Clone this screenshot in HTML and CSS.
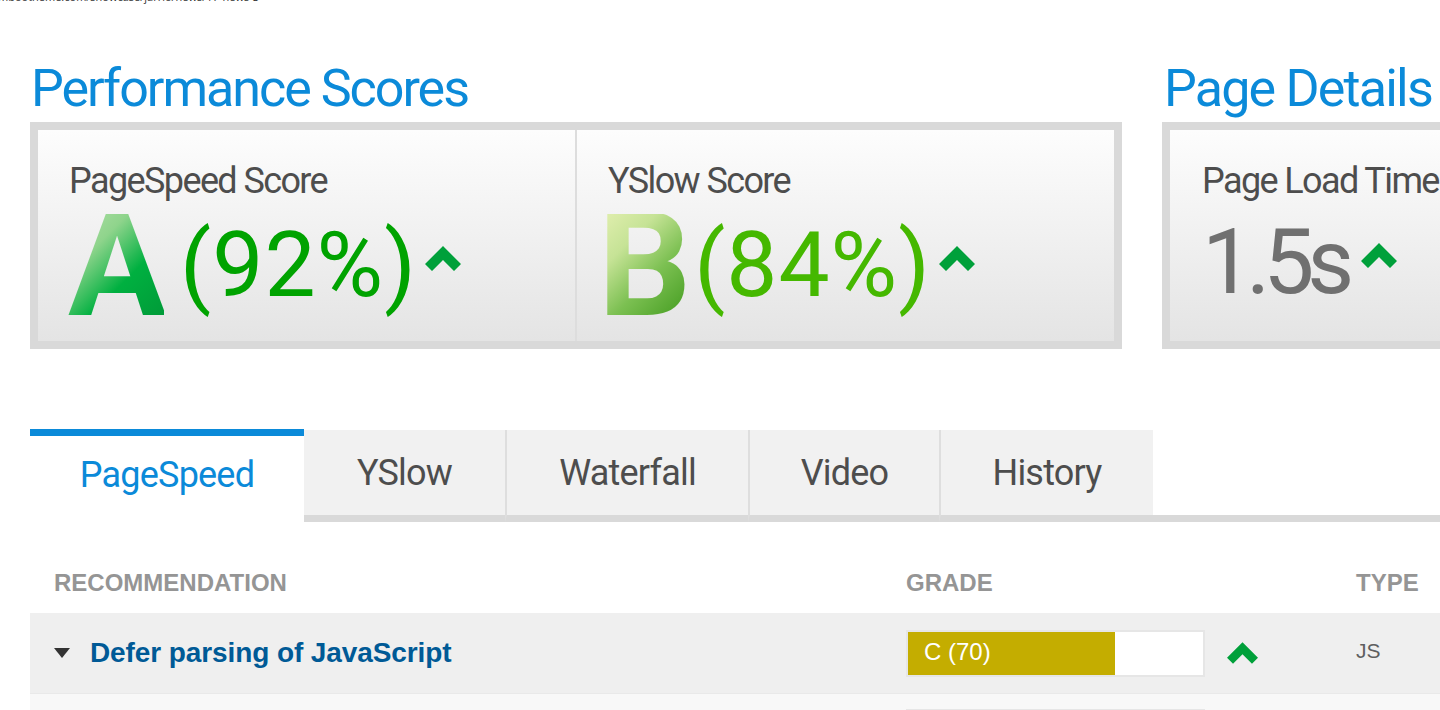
FILE: index.html
```html
<!DOCTYPE html>
<html lang="en">
<head>
<meta charset="utf-8">
<title>Performance Report</title>
<link rel="stylesheet" href="styles.css">
</head>
<body>
<div class="url">mbootheme.com/showcase/jarrio/news/17-news-3</div>
<main class="page">
  <div class="top">
    <section class="perf">
      <h2 class="heading">Performance Scores</h2>
      <div class="box">
        <div class="score">
          <div class="label">PageSpeed Score</div>
          <div class="value">
            <span class="grade grade-a">A</span>
            <span class="pct pct-a">(92%)</span>
            <svg class="caret" viewBox="0 0 36 25" aria-hidden="true"><polygon points="0,18 18,0 36,18 29,25 18,14 7,25"/></svg>
          </div>
        </div>
        <div class="divider"></div>
        <div class="score">
          <div class="label">YSlow Score</div>
          <div class="value">
            <span class="grade grade-b">B</span>
            <span class="pct pct-b">(84%)</span>
            <svg class="caret" viewBox="0 0 36 25" aria-hidden="true"><polygon points="0,18 18,0 36,18 29,25 18,14 7,25"/></svg>
          </div>
        </div>
      </div>
    </section>
    <section class="details">
      <h2 class="heading">Page Details</h2>
      <div class="box">
        <div class="score">
          <div class="label">Page Load Time</div>
          <div class="value">
            <span class="pct pct-time">1.5s</span>
            <svg class="caret" viewBox="0 0 36 25" aria-hidden="true"><polygon points="0,18 18,0 36,18 29,25 18,14 7,25"/></svg>
          </div>
        </div>
      </div>
    </section>
  </div>

  <nav class="tabs">
    <div class="tab active">PageSpeed</div>
    <div class="tab t-yslow">YSlow</div>
    <div class="tab t-waterfall">Waterfall</div>
    <div class="tab t-video">Video</div>
    <div class="tab t-history">History</div>
    <div class="tab-fill"></div>
  </nav>

  <div class="table">
    <div class="thead">
      <div>RECOMMENDATION</div>
      <div>GRADE</div>
      <div>TYPE</div>
    </div>
    <div class="row">
      <div class="rec"><span class="tri"></span><span class="rec-name">Defer parsing of JavaScript</span></div>
      <div class="grade-cell">
        <div class="bar"><div class="fill" style="width:70%"><span>C (70)</span></div></div>
        <svg class="caret small" viewBox="0 0 36 25" aria-hidden="true"><polygon points="0,18 18,0 36,18 29,25 18,14 7,25"/></svg>
      </div>
      <div class="type">JS</div>
    </div>
    <div class="row alt">
      <div class="rec"></div>
      <div class="grade-cell">
        <div class="bar"></div>
      </div>
      <div class="type"></div>
    </div>
  </div>
</main>
</body>
</html>
```
FILE: styles.css
```css
html, body {
  margin: 0;
  padding: 0;
  overflow: hidden;
  background: #ffffff;
}
body {
  width: 1440px;
  height: 710px;
  font-family: Roboto, "Open Sans", sans-serif;
  color: #4d4d4d;
}

.url {
  font-family: "Open Sans", sans-serif;
  font-size: 11px;
  line-height: 11px;
  height: 11px;
  margin-top: -9px;
  margin-left: -2px;
  color: #333;
  white-space: nowrap;
}

.page {
  padding-left: 30px;
  width: 1410px;
  overflow: hidden;
}

.top {
  display: flex;
  gap: 40px;
  width: 1700px;
}
.perf { width: 1092px; flex: none; }
.details { width: 520px; flex: none; }

.heading {
  margin: 0;
  padding-top: 59px;
  height: 61px;
  font-weight: 400;
  font-size: 52px;
  line-height: 56px;
  letter-spacing: -2px;
  color: #0b8ad9;
  white-space: nowrap;
  padding-left: 1px;
}
.details .heading { padding-left: 2px; letter-spacing: -1.8px; }

.box {
  display: flex;
  border: 8px solid #d9d9d9;
  height: 211px;
  background: linear-gradient(#fdfdfd, #e4e4e4);
}
.score {
  flex: 1;
  padding: 34px 0 0 31px;
}
.details .score { padding-left: 32px; }
.divider {
  width: 2px;
  background: #dddddd;
}

.label {
  font-size: 36px;
  line-height: 34px;
  height: 34px;
  letter-spacing: -1.6px;
  color: #4d4d4d;
  white-space: nowrap;
}
.value {
  display: flex;
  align-items: center;
  height: 113px;
  margin-top: 3px;
  white-space: nowrap;
}
.grade {
  font-weight: 700;
  font-size: 146px;
  line-height: 104px;
  height: 104px;
  letter-spacing: -2px;
  -webkit-background-clip: text;
  background-clip: text;
  color: transparent;
  margin-right: 16px;
  margin-top: 17px;
}
.grade-a {
  background-image: linear-gradient(135deg, #b3e0a8 0%, #8fd48c 30%, #00b040 62%, #009a38 100%);
  margin-left: -1px;
}
.grade-b {
  background-image: linear-gradient(135deg, #e2efb0 0%, #c6e396 30%, #7cc052 60%, #3f9a1c 100%);
  margin-left: -10px;
  margin-right: 5px;
}
.pct {
  font-size: 91px;
  line-height: 104px;
  font-weight: 400;
  letter-spacing: 1px;
  margin-top: 15px;
}
.pct-a { color: #00a300; }
.pct-b { color: #45b800; }
.pct-time { color: #707070; margin-left: 0; letter-spacing: -7px; margin-top: 9px; }

.caret {
  width: 36px;
  height: 25px;
  fill: #00a03a;
  margin-left: 8px;
  margin-top: 2px;
  flex: none;
}
.pct-time + .caret { margin-left: 14px; margin-top: -4px; }
.caret.small {
  width: 31px;
  height: 22px;
  margin-left: 22px;
  margin-top: 0;
}

/* Tabs */
.tabs {
  display: flex;
  align-items: flex-end;
  margin-top: 80px;
  height: 93px;
}
.tab {
  box-sizing: border-box;
  height: 92px;
  background: #f1f1f1;
  border-bottom: 7px solid #d9d9d9;
  font-size: 36px;
  letter-spacing: -0.8px;
  color: #4d4d4d;
  display: flex;
  align-items: center;
  justify-content: center;
  padding-bottom: 0;
}
.tab + .tab { border-left: 2px solid #dedede; }
.tab.active {
  height: 93px;
  width: 274px;
  background: #ffffff;
  border-top: 7px solid #0b8ad9;
  border-bottom: 0;
  color: #0b8ad9;
  padding-bottom: 8px;
}
.tab.active + .tab { border-left: 0; }
.t-yslow { width: 201px; }
.t-waterfall { width: 243px; }
.t-video { width: 191px; }
.t-history { width: 214px; }
.tab-fill {
  flex: 1;
  height: 7px;
  background: #d9d9d9;
}

/* Table */
.table {
  font-family: "Liberation Sans", Arial, sans-serif;
  width: 1450px;
}
.thead, .row {
  display: grid;
  grid-template-columns: 852px 450px 1fr;
  padding-left: 24px;
}
.thead {
  padding-top: 50px;
  padding-bottom: 19px;
  font-size: 24px;
  line-height: 22px;
  font-weight: 700;
  color: #959595;
}
.row {
  height: 80px;
  align-items: center;
  background: #efefef;
}
.row.alt {
  background: #f8f8f8;
  border-top: 1px solid #e9e9e9;
  align-items: start;
}
.row.alt .grade-cell { padding-top: 15px; }
.rec {
  display: flex;
  align-items: center;
}
.tri {
  width: 0;
  height: 0;
  border-left: 8px solid transparent;
  border-right: 8px solid transparent;
  border-top: 10px solid #333333;
  margin-right: 20px;
}
.rec-name {
  font-size: 28px;
  font-weight: 700;
  color: #005a96;
  letter-spacing: -0.1px;
}
.grade-cell {
  display: flex;
  align-items: center;
}
.bar {
  box-sizing: border-box;
  width: 299px;
  height: 47px;
  border: 2px solid #e6e6e6;
  background: #ffffff;
}
.fill {
  height: 100%;
  background: #c4ad00;
  display: flex;
  align-items: center;
}
.fill span {
  color: #ffffff;
  font-size: 24px;
  padding-left: 16px;
  padding-bottom: 2px;
}
.type {
  font-size: 21px;
  color: #5f5f5f;
  padding-bottom: 4px;
}
```
